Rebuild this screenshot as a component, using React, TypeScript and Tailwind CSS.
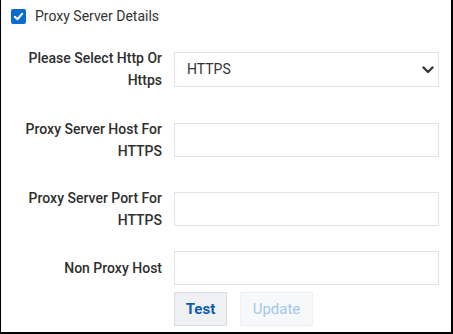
import { useState } from "react";

const font = { fontFamily: "Roboto, 'Noto Sans', sans-serif" };

const Field = ({ label, className }: { label: React.ReactNode; className: string }) => (
  <div className={`flex items-center ${className}`}>
    <label className="w-[161px] pl-[20px] text-right text-[14px] font-medium leading-[22px] text-[#2f2f2f]">
      {label}
    </label>
    <input
      type="text"
      className="ml-[12px] h-[34px] w-[265px] border border-[#e1e3e8] bg-white px-3 text-[14px] outline-none"
    />
  </div>
);

export default function App() {
  const [checked, setChecked] = useState(true);
  const [proto, setProto] = useState("HTTPS");

  return (
    <div
      style={font}
      className="h-[334px] w-[453px] border-b-2 border-l border-r-2 border-black bg-white"
    >
      <div className="flex h-[32px] items-center pl-[10px] pt-[1px]">
        <button
          onClick={() => setChecked(!checked)}
          className={`flex h-[15px] w-[15px] items-center justify-center rounded-[2px] ${
            checked ? "bg-[#0b6ccf]" : "border border-gray-400 bg-white"
          }`}
        >
          {checked && (
            <svg width="11" height="11" viewBox="0 0 12 12" fill="none">
              <path d="M2 6.3 L4.8 9 L10 3" stroke="white" strokeWidth="2.2" strokeLinecap="round" strokeLinejoin="round" />
            </svg>
          )}
        </button>
        <span className="ml-[9px] text-[14px] text-[#333333]">Proxy Server Details</span>
      </div>

      <div className="mt-[14px] flex h-[46px] items-center">
        <label className="w-[161px] pl-[20px] text-right text-[14px] font-medium leading-[22px] text-[#2f2f2f]">
          Please Select Http Or Https
        </label>
        <div className="relative ml-[12px] h-[35px] w-[265px]">
          <select
            value={proto}
            onChange={(e) => setProto(e.target.value)}
            className="h-full w-full appearance-none border border-[#e1e3e8] bg-white pl-[12px] text-[14px] text-[#333] outline-none"
          >
            <option>HTTP</option>
            <option>HTTPS</option>
          </select>
          <svg
            className="pointer-events-none absolute right-[5px] top-[14px]"
            width="12"
            height="8"
            viewBox="0 0 12 8"
            fill="none"
          >
            <path d="M1.5 1.5 L6 6 L10.5 1.5" stroke="#3b3631" strokeWidth="2.4" strokeLinecap="round" strokeLinejoin="round" />
          </svg>
        </div>
      </div>

      <Field label="Proxy Server Host For HTTPS" className="mt-[25px] h-[46px]" />
      <Field label="Proxy Server Port For HTTPS" className="mt-[23px] h-[46px]" />
      <Field label="Non Proxy Host" className="mt-[19px] h-[34px]" />

      <div className="ml-[173px] mt-[7px] flex gap-[13px]">
        <button className="h-[34px] w-[53px] border border-[#d9dde4] bg-[#eef0f4] text-[15px] font-bold text-[#0b5cad]">
          Test
        </button>
        <button
          disabled
          className="h-[34px] w-[73px] border border-[#eef0f3] bg-[#f7f8f9] text-[15px] text-[#a3c6ec]"
        >
          Update
        </button>
      </div>
    </div>
  );
}
